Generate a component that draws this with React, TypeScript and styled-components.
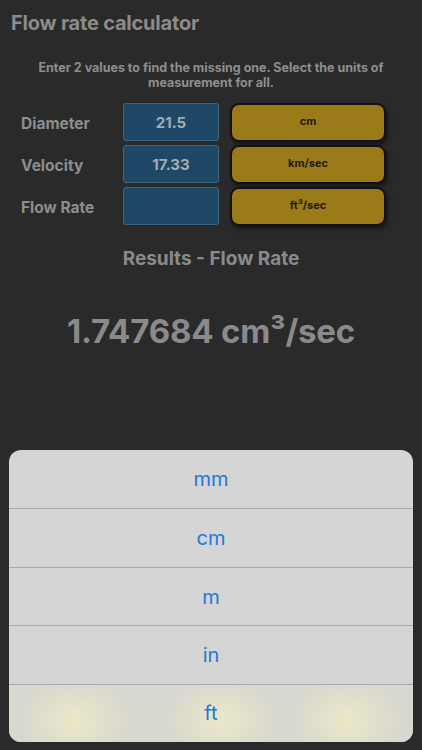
import React from 'react'
import styled, { createGlobalStyle } from 'styled-components'

const GlobalStyle = createGlobalStyle`
  html, body {
    margin: 0;
    padding: 0;
    background: #2a2a2a;
  }
  body {
    font-family: Inter, "Noto Sans", "Liberation Sans", sans-serif;
  }
`

const rows = [
  { label: 'Diameter', value: '21.5', unit: 'cm' },
  { label: 'Velocity', value: '17.33', unit: 'km/sec' },
  { label: 'Flow Rate', value: '', unit: 'ft³/sec' },
]

const options = ['mm', 'cm', 'm', 'in', 'ft']

function App() {
  return (
    <Page>
      <GlobalStyle />
      <Title>Flow rate calculator</Title>
      <Hint>Enter 2 values to find the missing one. Select the units of measurement for all.</Hint>
      <Form>
        {rows.map((row) => (
          <React.Fragment key={row.label}>
            <Label>{row.label}</Label>
            <ValueBox>{row.value}</ValueBox>
            <UnitButton>{row.unit}</UnitButton>
          </React.Fragment>
        ))}
      </Form>
      <ResultsTitle>Results - Flow Rate</ResultsTitle>
      <ResultValue>1.747684 cm³/sec</ResultValue>
      <Sheet>
        {options.map((opt, i) => (
          <SheetOption key={opt} $glow={i === options.length - 1}>
            {opt}
          </SheetOption>
        ))}
      </Sheet>
    </Page>
  )
}

const Page = styled.div`
  width: 422px;
  height: 750px;
  box-sizing: border-box;
  display: flex;
  flex-direction: column;
  background: #2a2a2a;
  color: #8a8a8a;
  overflow: hidden;
`

const Title = styled.h1`
  margin: 10px 0 0 11px;
  font-size: 20px;
  font-weight: 700;
  line-height: 26px;
  letter-spacing: -0.2px;
  color: #8b8b8b;
`

const Hint = styled.p`
  margin: 24px auto 0;
  width: 360px;
  text-align: center;
  font-size: 12.5px;
  font-weight: 700;
  line-height: 15px;
  color: #8e8e8e;
`

const Form = styled.div`
  margin: 13px 0 0 21px;
  display: grid;
  grid-template-columns: 91px 96px 156px;
  grid-auto-rows: 38px;
  column-gap: 11px;
  row-gap: 4px;
  align-items: center;
`

const Label = styled.div`
  font-size: 15.5px;
  font-weight: 700;
  color: #8d8d8d;
  padding-top: 2px;
`

const ValueBox = styled.div`
  height: 38px;
  box-sizing: border-box;
  display: flex;
  align-items: center;
  justify-content: center;
  background: #1f4766;
  border: 1.5px solid #3a6686;
  border-radius: 3px;
  font-size: 15px;
  font-weight: 700;
  color: #a3acb4;
`

const UnitButton = styled.div`
  height: 39px;
  box-sizing: border-box;
  display: flex;
  align-items: center;
  justify-content: center;
  background: #9b7b17;
  border: 2px solid #111;
  border-radius: 9px;
  box-shadow: 2px 3px 4px rgba(0, 0, 0, 0.45);
  font-size: 11px;
  font-weight: 700;
  color: #1c1a12;
  padding-bottom: 2px;
`

const ResultsTitle = styled.h2`
  margin: 22px 0 0;
  text-align: center;
  font-size: 19px;
  font-weight: 700;
  line-height: 24px;
  color: #8a8a8a;
`

const ResultValue = styled.div`
  margin-top: 40px;
  text-align: center;
  font-size: 33px;
  font-weight: 700;
  line-height: 40px;
  letter-spacing: -0.2px;
  color: #8a8a8a;
`

const Sheet = styled.div`
  margin: auto 9px 8px;
  background: #d5d5d5;
  border-radius: 12px;
  overflow: hidden;
  display: flex;
  flex-direction: column;
`

const SheetOption = styled.div<{ $glow?: boolean }>`
  height: 58.4px;
  box-sizing: border-box;
  display: flex;
  align-items: center;
  justify-content: center;
  font-size: 20px;
  font-weight: 400;
  color: #2277d9;
  & + & {
    border-top: 1px solid #a9a9a9;
  }
  ${(p) =>
    p.$glow &&
    `
    background:
      radial-gradient(ellipse 55px 42px at 66px 62%, #ebe8c6 0%, rgba(235,232,198,0) 100%),
      radial-gradient(ellipse 55px 42px at 212px 62%, #ebe8c6 0%, rgba(235,232,198,0) 100%),
      radial-gradient(ellipse 55px 42px at 338px 62%, #ebe8c6 0%, rgba(235,232,198,0) 100%),
      #d8d8d0;
  `}
`

export default App
